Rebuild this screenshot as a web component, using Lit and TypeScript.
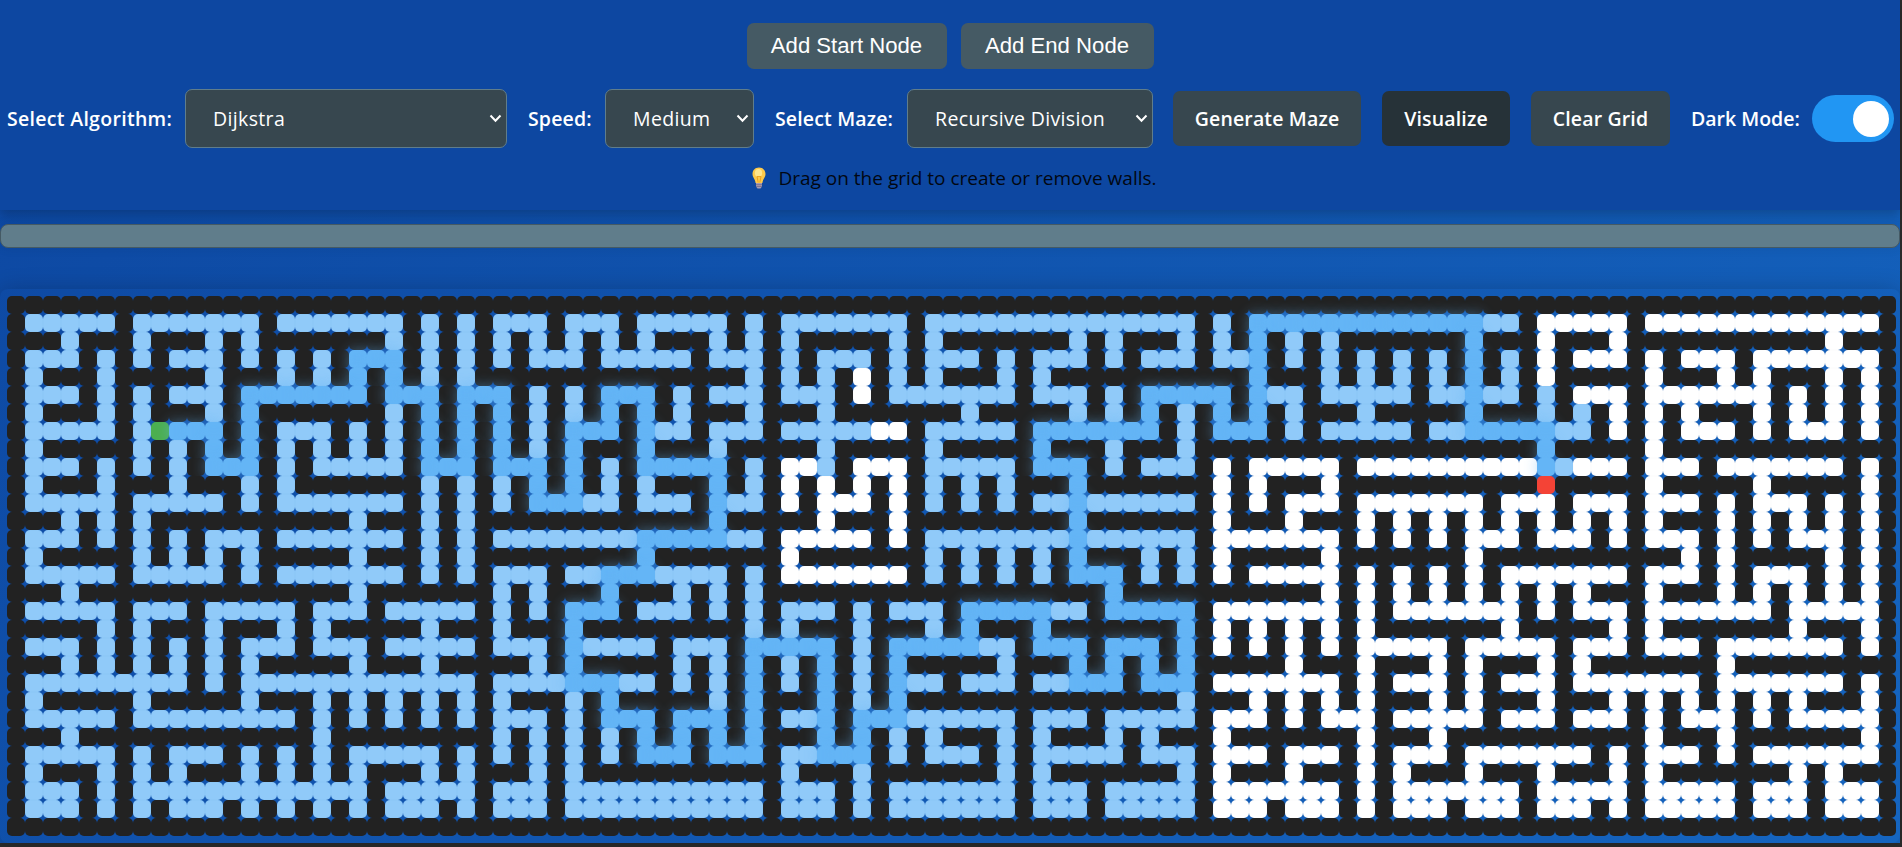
import { LitElement, html, css } from "lit";
import { customElement } from "lit/decorators.js";

/* # wall, . open, v visited, p shortest path, s start, e end */
const MAZE: string[] = [
  "#".repeat(105),
  "#vvvvv#vvvvvvv#vvvvvvv#v#v#" + "vvv#vvv#vvvvv#v#vvvvvvv#vvv" + "vvvvvvvvvvvv#v#pppppppppppp" + "pvv#.....#.............#",
  "###v###v###v#v#######v#v#v#" + "v#v#v#v#v###v#v#v#####v#v##" + "#####v#v###v#v#p#v#v#######" + "p###.###.###########.###",
  "#vvv#v#v#vvv#v#v#v#ppp#v#v#" + "v#vvv#vvvvv#vvv#v#vvv#v#vvv" + "#v#vvv#v#vvv#vvp#v#v#v#v#v#" + "p#v#.#...#.#...#.......#",
  "#v###v#####v###v#v#p#p#v#v#" + "##############v#v#v#.#v#v##" + "#v#v###########p###v#v#v#v#" + "p#v#.#####.###.#.###.#.#",
  "#vvv#v#v#vvv#ppppppp#ppp#pp" + "p#v#v#ppp#v#vvv#vvv#.#vvvvv" + "vv#vvv#v#ppppp#pvv#vvvvv#vv" + "pvv#v#...#.......#.#.#.#",
  "#v###v#v###v#p#######v#p#p#" + "p#v#v#p#p#v###v###v#######v" + "#####v#v#p#v#p#p#v###v#####" + "p###v#v#.#.#.###.#.#.#.#",
  "#vvvvv#vsppp#p#vvv#v#v#p#p#" + "p#v#ppp#pvv#vvv#vvvvv..#vvv" + "vv#ppppppp#v#ppp#v#vvvvv#vv" + "pppppvv#.#.#...#.#...#.#",
  "#v#####v#v#p#p#v#v#v#v#p#p#" + "p#v#p###p###v#####v#####v##" + "###p###v###v###############" + "####p#####.#############",
  "#vvv#v#v#v#ppp#v#vvvvv#ppp#" + "ppp#p#v#ppppp#v#..v#...#vvv" + "vv#ppp#v#vvv#.#.....#......" + "....pv...#...#.......#.#",
  "#v###v###v###v#v#######v#v#" + "v#p#p#v#v###p#v#.#.#.#.#v#v" + "#v###p#######.#.###.#######" + "####e#####.#####.#####.#",
  "#vvvvv#vvvvv#v#vvvvvvv#v#v#" + "v#pppvv#vvv#pvv#.#...#.#v#v" + "#v#vvpvvvvvv#.#.#...#......" + ".#...#...#...#.#...#.#.#",
  "###v#v#v###########v###v#v#" + "############p#####.###.####" + "#####p#######.###.###.#.#.#" + ".#.#.#.#.#.###.#.#.#.#.#",
  "#vvv#v#v#v#vvv#vvvvvvv#v#v#" + "vvvvvvvvpppppvv#.....#.#vvv" + "vvvvvpvvvvvv#.......#.#.#.#" + "...#...#.#...#.#.#...#.#",
  "#v#####v#v#v#v#####v###v#v#" + "########p#######.#######v#v" + "#v#v#p###v#v#.#####.#######" + ".###########.#.#####.#.#",
  "#vvvvv#vvvvv#v#vvvvvvv#v#v#" + "vvv#vvpppvvvv#v#.......#v#v" + "#v#v#ppp#v#v#.#.....#.#.#.#" + ".#.......#...#.#...#.#.#",
  "###v###############v#######" + "v#v###p###v#v#v############" + "#######p###########.#.#.#.#" + ".#.#.#.###.###.#.#.#.#.#",
  "#vvvvv#vvv#vvvvv#vvv#vvvvv#" + "v#v#ppp#vvv#v#v#vvv#v#vvv#p" + "ppppvv#ppppp#.......#.#...." + "...#.#...#.......#.....#",
  "#####v#v###v###v#v#####v###" + "v###p#########v#v###v###v#p" + "###p#######p#.#.#.#.#.#####" + "##.#####.#.#######.###.#",
  "#vvv#v#v#v#v#vvv#vvv#vvvvv#" + "vvv#pvvvv#vvv#ppppp#v#ppppp" + "vv#ppp#ppp#p#.#.#.#.#.....#" + ".....#...#...#.......#.#",
  "###v#v#v#v#v#v#####v###v###" + "##v#p#####v#v#p#v#p#v#p####" + "#v###p#p#p#p#####.###.###.#" + ".###.#.#######.#########",
  "#vvvvvvvvv#v#vvvvvvvvvvvvv#" + "vvvvpppvv#v#v#p#v#p#v#pvv#v" + "vv#vvppp#ppp#.......#.#...#" + ".#...#.......#.......#.#",
  "#v#####v#####v###v#v#v#v#v#" + "v###v#p#####v#p###p#v#p####" + "###########v###.#.#.#.###.#" + ".###.###.#.#.#.#.#.###.#",
  "#vvvvv#vvvvvvvvv#v#v#v#v#v#" + "vvv#v#ppp#ppp#p#vvp#pppvvvv" + "vv#vvv#vvvvv#...#.#...#...." + ".#...#...#.#...#.#.....#",
  "###v#############v#########" + "v#v#v#v#p#p#p#p###p#p#v#v##" + "#v#v###v#v###.#######.###.#" + "##########.###.#######.#",
  "#vvvvv#v#vvv#v#v#v#vvvvv#v#" + "v#v#v#v#ppp#ppp#vvppp#v#vvv" + "#v#vvvvv#vvv#...#...#.#...#" + ".......#.#...#.#.......#",
  "#v###v#v#v###v#v#v#v###v#v#" + "##v#v###########v###v######" + "#v#v#######v#.###.###.#.###" + ".###.###.#.#######.#.###",
  "#vvv#v#vvvvvvvvvvvvv#vvvvv#" + "vvv#vvvvvvvvvvv#vvv#v#vvvvv" + "vv#vvv#vvvvv#.......#.#...." + "...#.....#.....#...#...#",
  "#vvv#v#v#vvv#v#v#v#v#vvv#v#" + "vvv#vvvvvvvvvvv#vvv#v#vvvvv" + "vv#vvv#vvvvv#...#...#.#...#" + "...#...#.#.....#...#...#",
  "#".repeat(105),
];

const KIND: Record<string, string> = {
  "#": "wall",
  ".": "open",
  v: "visited",
  p: "path",
  s: "start",
  e: "end",
};

@customElement("maze-grid")
class MazeGrid extends LitElement {
  static styles = css`
    :host {
      display: block;
      box-sizing: border-box;
      height: 554px;
      padding: 7px 4px 7px 7px;
      border-radius: 8px;
      box-shadow: 0 0 22px rgba(0, 0, 0, 0.2);
      overflow: hidden;
    }
    .row {
      display: flex;
      height: 18px;
    }
    .cell {
      flex: 0 0 18px;
      height: 18px;
      border-radius: 5px;
      position: relative;
    }
    .cell:last-child {
      flex-basis: 17px;
    }
    .wall { background: #222; }
    .open { background: #fff; box-shadow: inset 0 0 1px rgba(0, 0, 0, 0.1); }
    .visited { background: #90caf9; box-shadow: inset 0 0 1px rgba(40, 110, 190, 0.2); }
    .path { background: #64b5f6; box-shadow: 0 0 14px rgba(100, 181, 246, 0.48); }
    .start { background: #4caf50; }
    .end { background: #f44336; }
  `;

  render() {
    return MAZE.map(
      (line) => html`<div class="row">${[...line].map((c) => html`<div class="cell ${KIND[c]}"></div>`)}</div>`,
    );
  }
}

@customElement("app-root")
class AppRoot extends LitElement {
  static styles = css`
    :host {
      display: block;
      box-sizing: border-box;
      width: 1902px;
      height: 847px;
      padding-right: 2px;
      background: #2b2b2b;
      overflow: hidden;
      font-family: "Open Sans", "Noto Sans", sans-serif;
      color: #fff;
    }
    .page {
      height: 843px;
      background: linear-gradient(135deg, #0d47a1, #1565c0);
    }
    header {
      box-sizing: border-box;
      height: 210px;
      padding-top: 23px;
      background: #0d47a1;
      box-shadow: 0 5px 10px rgba(0, 0, 0, 0.2);
    }
    .nodes {
      display: flex;
      justify-content: center;
      gap: 14px;
      height: 46px;
    }
    .node-btn {
      box-sizing: border-box;
      border: 0;
      border-radius: 7px;
      background: #455a64;
      color: #fff;
      font: 22.15px "Liberation Sans", Arial, sans-serif;
      padding: 0;
      width: 200px;
    }
    .node-btn.end { width: 193px; }
    .controls {
      display: flex;
      align-items: center;
      height: 59px;
      margin-top: 20px;
      padding-left: 7px;
    }
    .label, .btn, .value {
      white-space: nowrap;
      font-size: 19.5px;
      letter-spacing: 0.15px;
    }
    .label, .value { padding-bottom: 1px; }
    .value { letter-spacing: 0.35px; }
    .label, .btn { font-weight: 600; }
    .label { flex: none; }
    .select {
      flex: none;
      box-sizing: border-box;
      display: flex;
      align-items: center;
      justify-content: space-between;
      height: 59px;
      padding: 0 4px 0 27px;
      border: 1px solid #607d8b;
      border-radius: 7px;
      background: #37474f;
    }
    .btn {
      flex: none;
      box-sizing: border-box;
      height: 55px;
      border: 0;
      padding: 0 0 1px;
      border-radius: 7px;
      background: #37474f;
      color: #fff;
      font-family: inherit;
    }
    .btn.go { background: #263238; }
    .toggle {
      flex: none;
      box-sizing: border-box;
      display: flex;
      justify-content: flex-end;
      align-items: center;
      width: 82px;
      height: 47px;
      padding-right: 5px;
      border-radius: 24px;
      background: #2196f3;
    }
    .knob {
      width: 36px;
      height: 36px;
      border-radius: 50%;
      background: #fff;
    }
    .w-alg { width: 178px; letter-spacing: 0.3px; }
    .w-speed { width: 77px; }
    .w-maze { width: 132px; }
    .w-dark { width: 121px; letter-spacing: 0; }
    .s-alg { width: 322px; margin-right: 21px; }
    .s-speed { width: 149px; margin-right: 21px; }
    .s-maze { width: 246px; margin-right: 20px; }
    .b-gen { width: 188px; margin-right: 21px; }
    .b-go { width: 128px; margin-right: 21px; }
    .b-clear { width: 139px; margin-right: 21px; }
    .hint {
      display: flex;
      align-items: center;
      justify-content: center;
      gap: 12px;
      height: 32px;
      margin-top: 14px;
      padding-left: 9px;
      color: #020712;
      font-size: 19px;
      white-space: nowrap;
    }
    .progress {
      box-sizing: border-box;
      height: 24px;
      margin: 14px 0 41px;
      border: 1px solid #455a64;
      border-radius: 8px;
      background: #607d8b;
      box-shadow: 0 0 12px rgba(0, 0, 0, 0.08);
    }
  `;

  private arrow() {
    return html`<svg width="13" height="9" viewBox="0 0 13 9">
      <path d="M1.5 1.5 L6.5 6.8 L11.5 1.5" fill="none" stroke="#fff" stroke-width="2" />
    </svg>`;
  }

  render() {
    return html`
      <div class="page">
        <header>
          <div class="nodes">
            <button class="node-btn">Add Start Node</button>
            <button class="node-btn end">Add End Node</button>
          </div>
          <div class="controls">
            <span class="label w-alg">Select Algorithm:</span>
            <div class="select s-alg"><span class="value">Dijkstra</span>${this.arrow()}</div>
            <span class="label w-speed">Speed:</span>
            <div class="select s-speed"><span class="value">Medium</span>${this.arrow()}</div>
            <span class="label w-maze">Select Maze:</span>
            <div class="select s-maze"><span class="value">Recursive Division</span>${this.arrow()}</div>
            <button class="btn b-gen">Generate Maze</button>
            <button class="btn go b-go">Visualize</button>
            <button class="btn b-clear">Clear Grid</button>
            <span class="label w-dark">Dark Mode:</span>
            <div class="toggle"><div class="knob"></div></div>
          </div>
          <div class="hint">
            <svg width="14" height="22" viewBox="0 0 14 22">
              <path d="M7 .5C3 .5.5 3.400.5 7c0 3.500 2.600 4.800 3.100 9h6.800c.5-4.200 3.100-5.500 3.100-9C13.500 3.400 11 .5 7 .5z" fill="#fdc94a" />
              <ellipse cx="6.500" cy="6" rx="3.600" ry="4" fill="#ffe58c" />
              <path d="M5 9.500l1.200 6M9 9.500l-1.200 6M5 9.500h4" fill="none" stroke="#e8960c" stroke-width=".8" />
              <path d="M4 16h6v3.600L8.500 21.500h-3L4 19.600z" fill="#a79bb0" />
              <path d="M4 17.700h6M4 19.500h6" stroke="#6d6280" stroke-width=".7" />
            </svg>
            <span>Drag on the grid to create or remove walls.</span>
          </div>
        </header>
        <div class="progress"></div>
        <maze-grid></maze-grid>
      </div>
    `;
  }
}
